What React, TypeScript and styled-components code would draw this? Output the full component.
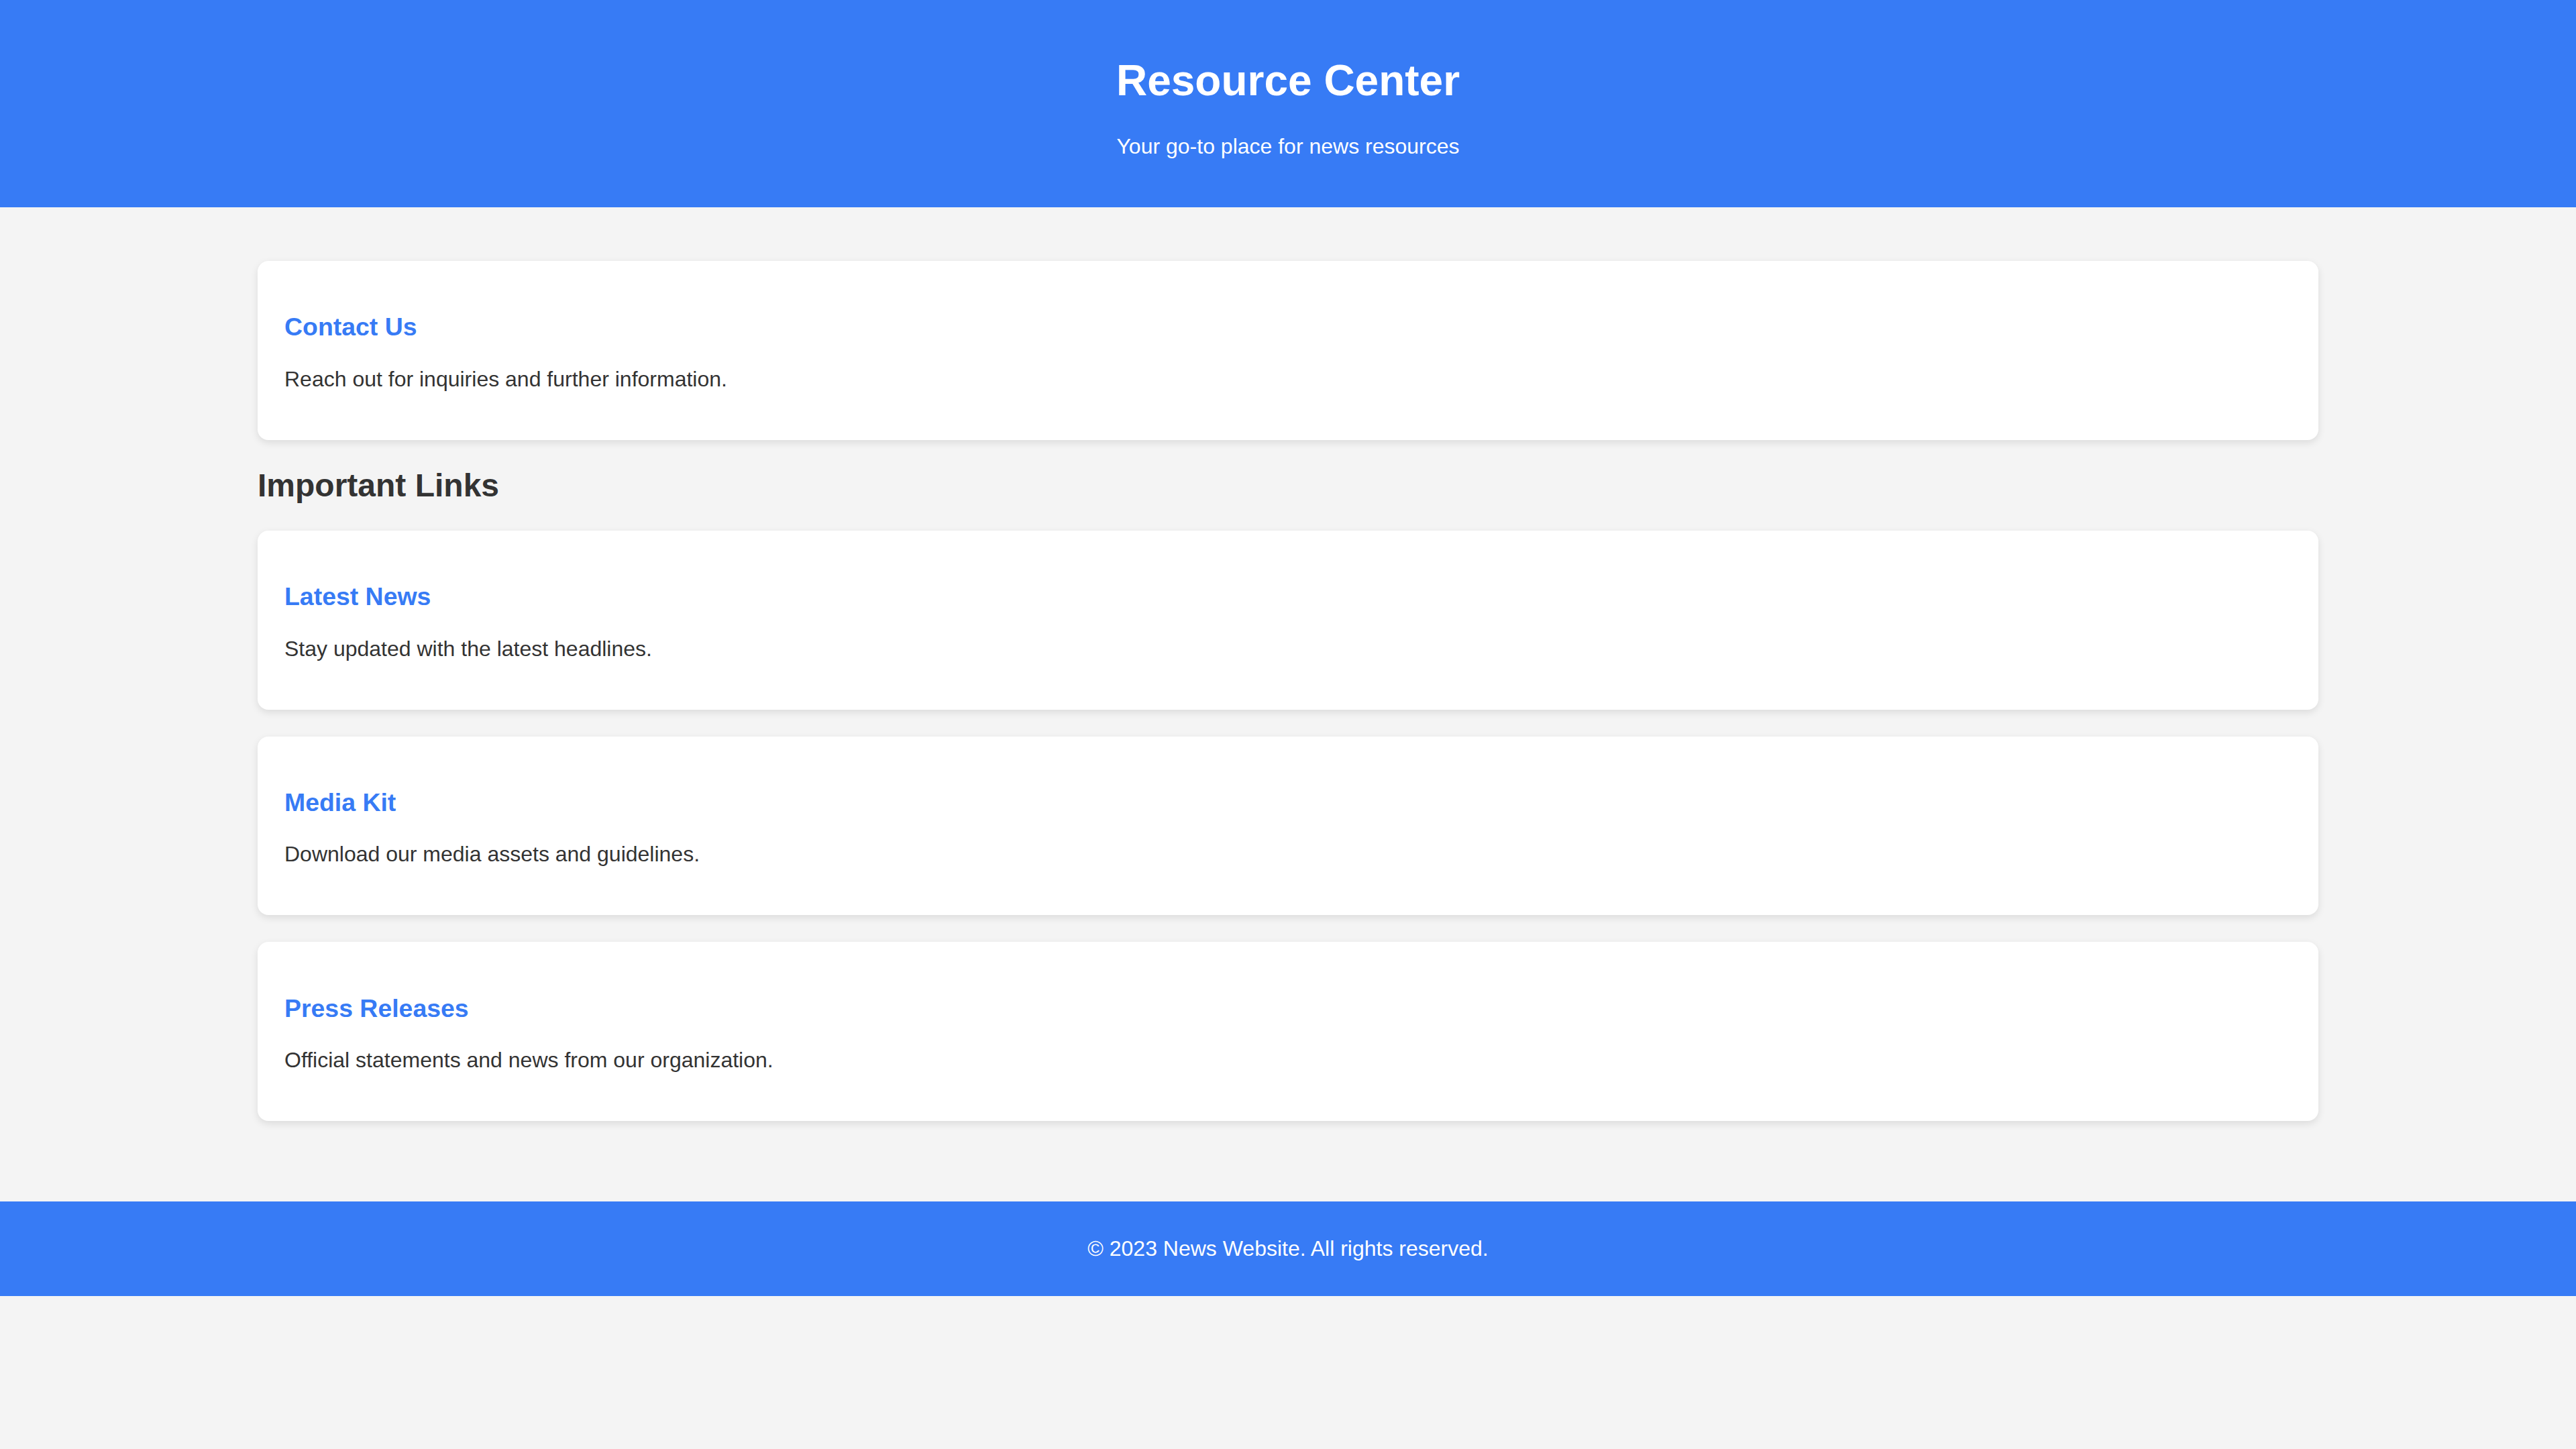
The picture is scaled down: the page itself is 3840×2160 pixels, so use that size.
import React from "react";
import styled, { createGlobalStyle } from "styled-components";

const GlobalStyle = createGlobalStyle`
  html, body {
    margin: 0;
    padding: 0;
    background: #f4f4f4;
    font-family: "Liberation Sans", Arial, sans-serif;
    font-size: 32px;
    color: #333333;
  }
`;

const BLUE = "#377bf5";

const Header = styled.header`
  background: ${BLUE};
  color: #ffffff;
  text-align: center;
  padding: 40px;
`;

const Title = styled.h1`
  font-size: 64px;
  font-weight: 700;
  margin: 42.88px 0;
`;

const Subtitle = styled.p`
  font-size: 32px;
  margin: 32px 0;
`;

const Main = styled.main`
  width: 80%;
  margin: 0 auto;
  padding: 40px 0;
`;

const Card = styled.section`
  background: #ffffff;
  border-radius: 16px;
  box-shadow: 0 4px 12px rgba(0, 0, 0, 0.1);
  padding: 40px;
  margin: 40px 0;
`;

const CardTitle = styled.h3`
  color: ${BLUE};
  font-size: 37.44px;
  font-weight: 700;
  margin: 37.44px 0;
`;

const CardText = styled.p`
  font-size: 32px;
  margin: 32px 0;
  color: #333333;
`;

const SectionHeading = styled.h2`
  font-size: 48px;
  font-weight: 700;
  color: #333333;
  margin: 39.84px 0;
`;

const Footer = styled.footer`
  background: ${BLUE};
  color: #ffffff;
  text-align: center;
  padding: 20px;
  margin-top: 40px;
`;

const FooterText = styled.p`
  font-size: 32px;
  margin: 32px 0;
`;

type Item = { title: string; text: string };

const links: Item[] = [
  { title: "Latest News", text: "Stay updated with the latest headlines." },
  { title: "Media Kit", text: "Download our media assets and guidelines." },
  { title: "Press Releases", text: "Official statements and news from our organization." },
];

const InfoCard = ({ title, text }: Item) => (
  <Card>
    <CardTitle>{title}</CardTitle>
    <CardText>{text}</CardText>
  </Card>
);

export default function App() {
  return (
    <>
      <GlobalStyle />
      <Header>
        <Title>Resource Center</Title>
        <Subtitle>Your go-to place for news resources</Subtitle>
      </Header>
      <Main>
        <InfoCard title="Contact Us" text="Reach out for inquiries and further information." />
        <SectionHeading>Important Links</SectionHeading>
        {links.map((l) => (
          <InfoCard key={l.title} {...l} />
        ))}
      </Main>
      <Footer>
        <FooterText>© 2023 News Website. All rights reserved.</FooterText>
      </Footer>
    </>
  );
}
